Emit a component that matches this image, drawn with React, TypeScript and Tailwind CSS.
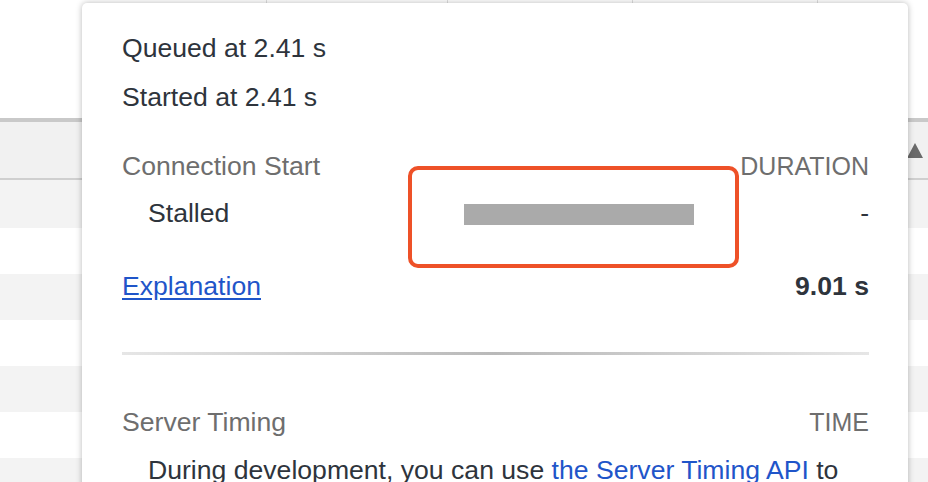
import React from "react";

export default function App() {
  const rows = [
    { h: "h-[48px]", bg: "bg-[#f3f3f3]" },
    { h: "h-[46px]", bg: "bg-white" },
    { h: "h-[46px]", bg: "bg-[#f3f3f3]" },
    { h: "h-[46px]", bg: "bg-white" },
    { h: "h-[46px]", bg: "bg-[#f3f3f3]" },
    { h: "h-[46px]", bg: "bg-white" },
    { h: "h-[46px]", bg: "bg-[#f3f3f3]" },
  ];
  return (
    <div className="relative w-[928px] h-[482px] overflow-hidden bg-white font-['Liberation_Sans',Arial,sans-serif]">
      {/* background table */}
      <div className="flex flex-col">
        <div className="flex h-[118px]">
          <div className="w-[267px] border-r border-[#dedede]" />
          <div className="w-[181px] border-r border-[#dedede]" />
          <div className="w-[185px] border-r border-[#dedede]" />
          <div className="w-[185px] border-r border-[#dedede]" />
          <div className="flex-1" />
        </div>
        <div className="h-[4px] bg-[#c9c9c9]" />
        <div className="flex h-[56px] items-center justify-end bg-[#f1f1f1] pr-[5px]">
          <svg width="16" height="15" viewBox="0 0 16 15">
            <polygon points="8,0 16,15 0,15" fill="#6a6a6a" />
          </svg>
        </div>
        <div className="h-[2px] bg-[#cfcfcf]" />
        {rows.map((r, i) => (
          <div key={i} className={`${r.h} ${r.bg}`} />
        ))}
      </div>

      {/* popup */}
      <div className="absolute left-[82px] top-[3px] w-[826px] h-[560px] rounded-[5px] bg-white shadow-[0_0_6px_rgba(0,0,0,0.28)] pt-[21px] pl-[40px] pr-[39px] text-[26.6px] text-[#2e343c]">
        <div className="flex h-[49px] items-center">Queued at 2.41 s</div>
        <div className="flex h-[49px] items-center">Started at 2.41 s</div>

        <div className="mt-[21px] flex h-[47px] items-center justify-between text-[#6e6e6e]">
          <span>Connection Start</span>
          <span className="text-[25px]">DURATION</span>
        </div>
        <div className="flex h-[48px] items-center">
          <div className="w-[342px] pl-[26px]">Stalled</div>
          <div className="h-[21px] w-[230px] bg-[#aaaaaa]" />
          <div className="flex-1 text-right">-</div>
        </div>

        <div className="mt-[25px] flex h-[48px] items-center justify-between">
          <a className="text-[#1f55c9] underline underline-offset-[3px]">Explanation</a>
          <span className="font-bold">9.01 s</span>
        </div>

        <div className="mt-[41px] h-[3px] bg-linear-to-r from-[#e6e6e6] via-[#b9b9b9] to-[#e6e6e6]" />

        <div className="mt-[44px] flex h-[48px] items-center justify-between text-[#6e6e6e]">
          <span>Server Timing</span>
          <span className="text-[25px]">TIME</span>
        </div>
        <div className="flex h-[48px] items-center pl-[26px] whitespace-nowrap">
          <span>
            During development, you can use{" "}
            <span className="text-[#1f55c9]">the Server Timing API</span> to
          </span>
        </div>

        {/* annotation box */}
        <div className="absolute left-[326px] top-[163px] h-[102px] w-[331px] rounded-[10px] border-[4px] border-[#ee5128]" />
      </div>
    </div>
  );
}
